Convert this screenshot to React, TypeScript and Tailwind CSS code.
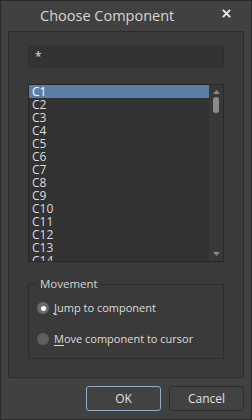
import React from "react";

const items = Array.from({ length: 14 }, (_, i) => `C${i + 1}`);

const App = () => {
  return (
    <div className="w-[252px] h-[420px] bg-[#414141] border border-[#2a2a2a] flex flex-col font-['Open_Sans',sans-serif] text-[#dcdcdc] select-none">
      {/* Title bar */}
      <div className="h-[30px] flex items-center justify-between pl-[39px] pr-[20px] shrink-0">
        <span className="text-[14.5px] text-[#d6d6d6]">Choose Component</span>
        <svg width="9" height="9" viewBox="0 0 10 10" className="mb-[6px]">
          <path d="M1 1 L9 9 M9 1 L1 9" stroke="#e8e8e8" strokeWidth="2.2" />
        </svg>
      </div>

      {/* Main panel */}
      <div className="ml-[7px] mr-[7px] h-[347px] bg-[#3a3a3a] border border-[#2c2c2c] flex flex-col px-[19px] pt-[14px] shrink-0">
        <div className="h-[22px] bg-[#333333] border border-[#2e2e2e] rounded-[3px] flex items-center px-[6px] text-[12px] text-[#e0e0e0]">
          *
        </div>

        {/* List */}
        <div className="mt-[16px] h-[178px] bg-[#323232] border border-[#272727] flex overflow-hidden">
          <div className="flex-1 flex flex-col overflow-hidden">
            {items.map((it, i) => (
              <div
                key={it}
                className={`h-[13px] shrink-0 flex items-center pl-[3px] text-[12px] leading-[13px] ${
                  i === 0 ? "bg-[#5a7fa6] text-white" : "text-[#dcdcdc]"
                }`}
              >
                {it}
              </div>
            ))}
          </div>
          <div className="w-[14px] bg-[#383838] flex flex-col items-center pt-[5px] pb-[5px]">
            <svg width="7" height="4" viewBox="0 0 7 4">
              <path d="M0 4 L3.5 0 L7 4 Z" fill="#8a8a8a" />
            </svg>
            <div className="mt-[3px] w-[6px] h-[16px] rounded-[3px] bg-[#8c8c8c]" />
            <div className="flex-1" />
            <svg width="7" height="4" viewBox="0 0 7 4">
              <path d="M0 0 L7 0 L3.5 4 Z" fill="#8a8a8a" />
            </svg>
          </div>
        </div>

        {/* Movement group */}
        <fieldset className="mt-[14px] h-[83px] border border-[#2d2d2d] pl-[8px]">
          <legend className="px-[3px] text-[11.5px] text-[#d4d4d4] leading-[16px]">Movement</legend>
          <div className="mt-[8px] flex items-center gap-[5px] text-[11px] text-[#dcdcdc]">
            <div className="w-[12px] h-[12px] rounded-full bg-[#6a6a6a] flex items-center justify-center">
              <div className="w-[5px] h-[5px] rounded-full bg-white" />
            </div>
            <span>
              <span className="underline underline-offset-2">J</span>ump to component
            </span>
          </div>
          <div className="mt-[14px] flex items-center gap-[5px] text-[11px] text-[#dcdcdc]">
            <div className="w-[12px] h-[12px] rounded-full bg-[#5e5e5e]" />
            <span>
              <span className="underline underline-offset-2">M</span>ove component to cursor
            </span>
          </div>
        </fieldset>
      </div>

      {/* Buttons */}
      <div className="flex justify-end gap-[8px] pr-[7px] pt-[8px]">
        <button className="w-[75px] h-[25px] rounded-[3px] border border-[#93aec9] bg-[#424242] text-[12px] text-[#e0e0e0]">
          OK
        </button>
        <button className="w-[75px] h-[25px] rounded-[3px] border border-[#2c2c2c] bg-[#424242] text-[12px] text-[#e0e0e0]">
          Cancel
        </button>
      </div>
    </div>
  );
};

export default App;
